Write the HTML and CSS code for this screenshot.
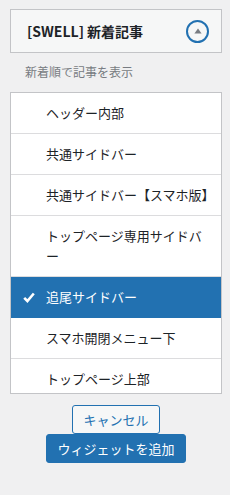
FILE: index.html
```html
<!DOCTYPE html>
<html lang="ja">
<head>
<meta charset="utf-8">
<title>SWELL 新着記事</title>
<link rel="stylesheet" href="styles.css">
</head>
<body>
<div class="panel">
  <div class="widget-head">
    <span class="widget-title">[SWELL] 新着記事</span>
    <span class="toggle" aria-label="閉じる">
      <svg width="8" height="6" viewBox="0 0 8 6"><path d="M4 0.5 L7.6 5.5 L0.4 5.5 Z" fill="#787c82"/></svg>
    </span>
  </div>
  <p class="desc">新着順で記事を表示</p>
  <ul class="area-list">
    <li class="area-item">ヘッダー内部</li>
    <li class="area-item">共通サイドバー</li>
    <li class="area-item">共通サイドバー【スマホ版】</li>
    <li class="area-item">トップページ専用サイドバー</li>
    <li class="area-item is-selected"><span class="check"><svg width="12" height="11" viewBox="0 0 12 11"><path d="M1.2 5.8 L4.4 9 L10.8 1.5" fill="none" stroke="#fff" stroke-width="2.6" stroke-linecap="butt" stroke-linejoin="miter"/></svg></span>追尾サイドバー</li>
    <li class="area-item">スマホ開閉メニュー下</li>
    <li class="area-item">トップページ上部</li>
  </ul>
  <div class="actions">
    <button class="btn btn-secondary">キャンセル</button>
    <button class="btn btn-primary">ウィジェットを追加</button>
  </div>
</div>
</body>
</html>
```

FILE: styles.css
```css
html, body {
  margin: 0;
  padding: 0;
}
body {
  background: #f0f0f1;
  font-family: "Noto Sans CJK JP", "Noto Sans", sans-serif;
  color: #1d2327;
}
.panel {
  padding: 9px 8px 0 10px;
}
.widget-head {
  display: flex;
  align-items: center;
  justify-content: space-between;
  height: 42px;
  border: 1px solid #c3c4c7;
  background: #f6f7f7;
  padding: 0 12px 0 16px;
}
.widget-title {
  font-size: 14px;
  font-weight: 700;
  line-height: 20px;
  color: #1d2327;
}
.toggle {
  width: 19px;
  height: 19px;
  border: 2px solid #2271b1;
  border-radius: 50%;
  display: flex;
  align-items: center;
  justify-content: center;
}
.toggle svg {
  display: block;
  margin-top: -1px;
}
.desc {
  margin: 9px 0 10px;
  padding-left: 15px;
  font-size: 12px;
  line-height: 20px;
  color: #787c82;
}
.area-list {
  list-style: none;
  margin: 0;
  padding: 0;
  height: 300px;
  overflow: hidden;
  background: #fff;
  border: 1px solid #c3c4c7;
}
.area-item {
  display: flex;
  align-items: flex-start;
  padding: 10px 11px 10px 35px;
  font-size: 13px;
  line-height: 20px;
  border-bottom: 1px solid #dcdcde;
  color: #1d2327;
}
.area-item.is-selected {
  background: #2271b1;
  color: #fff;
  border-bottom-color: #2271b1;
}
.check {
  display: flex;
  align-items: center;
  width: 23px;
  height: 20px;
  margin-left: -23px;
}
.check svg {
  display: block;
}
.actions {
  display: flex;
  flex-direction: column;
  align-items: center;
  margin-top: 11px;
}
.btn {
  font-family: "Noto Sans CJK JP", "Noto Sans", sans-serif;
  font-size: 13px;
  line-height: 27px;
  height: 29px;
  border-radius: 3px;
  border: 1px solid #2271b1;
  cursor: pointer;
  margin: 0;
}
.btn-secondary {
  background: #f6f7f7;
  color: #2271b1;
  padding: 0 10px;
}
.btn-primary {
  background: #2271b1;
  color: #fff;
  padding: 0 10px;
}
```
